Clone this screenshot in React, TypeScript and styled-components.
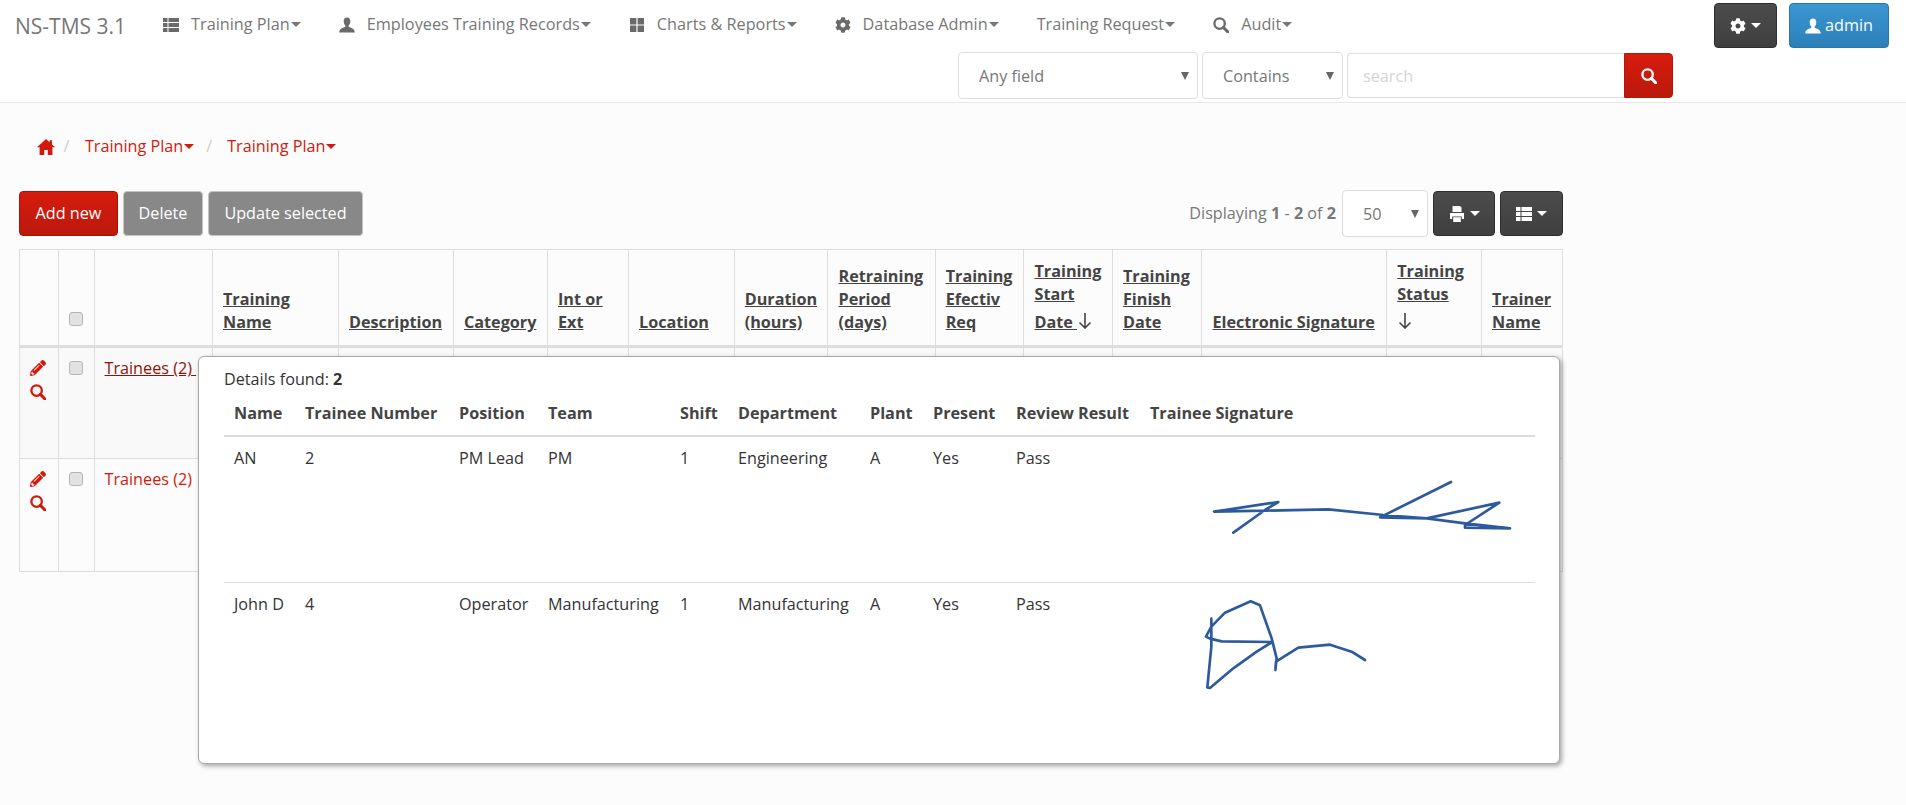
import React from "react";
import styled, { createGlobalStyle } from "styled-components";
import { FaCog, FaPencilAlt } from "react-icons/fa";

const Global = createGlobalStyle`
  html, body { margin: 0; padding: 0; background: #fcfcfc; }
  body { font-family: "Open Sans", "Liberation Sans", sans-serif; font-size: 16.2px; line-height: 23px; color: #333; min-height: 805px; }
  * { box-sizing: border-box; }
`;

const Header = styled.header`
  height: 103px;
  background: #fff;
  border-bottom: 1px solid #e7e7e7;
  display: flex;
  flex-direction: column;
`;
const TopRow = styled.div`
  display: flex;
  align-items: flex-start;
  justify-content: space-between;
  padding: 3px 17px 0 15px;
  height: 52px;
`;
const Brand = styled.span`
  font-size: 21px;
  color: #777;
  line-height: 46px;
  margin-right: 18px;
`;
const NavLeft = styled.nav`
  display: flex;
  align-items: center;
  height: 45px;
`;
const NavItem = styled.a`
  display: flex;
  align-items: center;
  color: #777;
  font-size: 16.25px;
  padding: 0 19px 2px;
  white-space: nowrap;
`;
const NavIcon = styled.span`
  display: inline-flex;
  margin-right: 12px;
  color: #6a6a6a;
`;
const Caret = styled.i<{ $color?: string }>`
  display: inline-block;
  width: 0;
  height: 0;
  margin-left: 1px;
  border-top: 5px solid ${(p) => p.$color || "currentColor"};
  border-left: 5px solid transparent;
  border-right: 5px solid transparent;
`;
const UserActions = styled.div`
  display: flex;
  gap: 12px;
`;
const Btn = styled.button<{ $kind: "red" | "gray" | "dark" | "blue"; $w: number }>`
  width: ${(p) => p.$w}px;
  height: 45px;
  display: inline-flex;
  align-items: center;
  justify-content: center;
  gap: 4px;
  padding: 0;
  font: inherit;
  color: #fff;
  border-radius: 4px;
  border: 1px solid
    ${(p) => ({ red: "#a81208", gray: "#c4c4c4", dark: "#2e2e2e", blue: "#2a76a8" })[p.$kind]};
  background: ${(p) =>
    ({
      red: "linear-gradient(#d61c0d, #bb190d)",
      gray: "#888888",
      dark: "linear-gradient(#4c4c4c, #3f3f3f)",
      blue: "linear-gradient(#3b96d2, #2c80b9)",
    })[p.$kind]};
`;
const SearchRow = styled.form`
  display: flex;
  justify-content: flex-end;
  padding-right: 233px;
  gap: 4px;
  height: 47px;
`;
const arrow = encodeURIComponent(
  '<svg xmlns="http://www.w3.org/2000/svg" width="8" height="8"><path d="M0 0h8L4 8z" fill="#666"/></svg>'
);
const Select = styled.select<{ $w: number }>`
  appearance: none;
  width: ${(p) => p.$w}px;
  height: 47px;
  padding: 2px 20px 0;
  font: inherit;
  color: #777;
  background: #fff url("data:image/svg+xml,${arrow}") no-repeat right 8px center;
  border: 1px solid #ddd;
  border-radius: 4px;
`;
const SearchGroup = styled.div`
  display: flex;
  height: 45px;
  margin-top: 1px;
`;
const SearchInput = styled.input`
  width: 277px;
  height: 45px;
  padding: 0 15px;
  font: inherit;
  border: 1px solid #ddd;
  border-right: 0;
  border-radius: 4px 0 0 4px;
  background: #fff;
  &::placeholder { color: #d4d4d4; }
`;
const SearchBtn = styled.button`
  width: 49px;
  height: 45px;
  padding: 0;
  display: flex;
  align-items: center;
  justify-content: center;
  color: #fff;
  border: 1px solid #b3160a;
  border-radius: 0 4px 4px 0;
  background: linear-gradient(#d61c0d, #bb190d);
`;

const Main = styled.main`
  width: 1563px;
  padding: 32px 0 0 19px;
`;
const Crumbs = styled.div`
  display: flex;
  align-items: center;
  height: 23px;
  padding-left: 18px;
  margin-bottom: 33px;
  color: #d2190b;
`;
const CrumbSep = styled.span<{ $l: number; $r: number }>`
  color: #ccc;
  margin: 0 ${(p) => p.$r}px 0 ${(p) => p.$l}px;
`;
const CrumbLink = styled.a`
  color: #d2190b;
  white-space: nowrap;
`;
const Toolbar = styled.div`
  display: flex;
  justify-content: space-between;
  align-items: center;
  height: 45px;
  margin-bottom: 13px;
`;
const ToolGroup = styled.div`
  display: flex;
  align-items: center;
  gap: 5px;
`;
const Count = styled.span`
  color: #777;
  margin-right: 1px;
`;

const TableWrap = styled.div`
  position: relative;
`;
const Grid = styled.table`
  width: 1543.5px;
  table-layout: fixed;
  border-collapse: collapse;
`;
const ColW = styled.col<{ $w: number }>`
  width: ${(p) => p.$w}px;
`;
const Th = styled.th`
  height: 97px;
  padding: 8px 10px 11px;
  border: 1px solid #ddd;
  border-bottom: 3px solid #ddd;
  vertical-align: bottom;
  text-align: left;
  font-weight: 700;
  color: #444;
`;
const SortLink = styled.a`
  text-decoration: underline;
`;
const ArrowSvg = styled.svg`
  vertical-align: -1px;
  fill: none;
  stroke: #444;
  stroke-width: 1.6;
`;
const Td = styled.td<{ $h: number; $striped?: boolean }>`
  height: ${(p) => p.$h}px;
  padding: 9px 10px;
  border: 1px solid #ddd;
  vertical-align: top;
  background: ${(p) => (p.$striped ? "#f9f9f9" : "transparent")};
`;
const IconStack = styled.div`
  display: flex;
  flex-direction: column;
  gap: 8px;
  color: #d2190b;
  margin-top: 3px;
`;
const Check = styled.input.attrs({ type: "checkbox" })<{ $head?: boolean }>`
  appearance: none;
  display: block;
  width: 14px;
  height: 14px;
  margin: 4px 0 ${(p) => (p.$head ? "8px" : "0")};
  background: #e2e2e2;
  border: 1px solid #b5b5b5;
  border-radius: 3px;
`;
const TraineeLink = styled.a<{ $hover?: boolean }>`
  white-space: pre;
  color: ${(p) => (p.$hover ? "#8f1007" : "#d2190b")};
  text-decoration: ${(p) => (p.$hover ? "underline" : "none")};
`;

const Popover = styled.div`
  position: absolute;
  left: 179px;
  top: 107px;
  width: 1362px;
  height: 408px;
  padding: 11px 25px;
  background: #fff;
  border: 1px solid #aaa;
  border-radius: 6px;
  box-shadow: 2px 2px 5px rgba(0, 0, 0, 0.35);
  color: #333;
`;
const Found = styled.div`
  height: 23px;
`;
const Detail = styled.table`
  width: 1311px;
  table-layout: fixed;
  border-collapse: collapse;
  margin-top: 3px;
`;
const DTh = styled.th`
  height: 42px;
  padding: 8px 10px 10px;
  text-align: left;
  font-weight: 700;
  color: #444;
  border-bottom: 2px solid #ddd;
  white-space: nowrap;
`;
const DTd = styled.td<{ $h: number; $line?: boolean }>`
  height: ${(p) => p.$h}px;
  padding: 10px;
  vertical-align: top;
  white-space: nowrap;
  border-bottom: ${(p) => (p.$line ? "1px solid #ddd" : "0")};
`;
const SigSvg = styled.svg`
  display: block;
  margin: -3px 0 0;
  width: 370px;
  height: 100px;
  fill: none;
  stroke: #2d5a9e;
  stroke-width: 8;
  stroke-linejoin: round;
  stroke-linecap: round;
`;

const ThList = () => (
  <svg width="16" height="16" viewBox="0 0 16 16" fill="currentColor">
    <path d="M0 1h4.5v4H0zM5.5 1H16v4H5.5zM0 6h4.5v4H0zM5.5 6H16v4H5.5zM0 11h4.5v4H0zM5.5 11H16v4H5.5z" />
  </svg>
);
const ThLarge = () => (
  <svg width="16" height="16" viewBox="0 0 16 16" fill="currentColor">
    <path d="M1 1h6.4v6.4H1zM8.6 1H15v6.4H8.6zM1 8.6h6.4V15H1zM8.6 8.6H15V15H8.6z" />
  </svg>
);
const User = () => (
  <svg width="16" height="16" viewBox="0 0 16 16" fill="currentColor">
    <path d="M8 0.5C5.7.5 4.7 2.2 4.7 4.2c0 1.8.7 3.3 1.6 4.3v1.3C5 10.7.4 11.2.2 15.5h15.6c-.2-4.3-4.8-4.8-6.1-5.7V8.5c.9-1 1.6-2.5 1.6-4.3C11.3 2.2 10.3.5 8 .5z" />
  </svg>
);
const Search = ({ s = 16 }: { s?: number }) => (
  <svg width={s} height={s} viewBox="0 0 16 16" fill="none" stroke="currentColor">
    <circle cx="6.6" cy="6.6" r="5.2" strokeWidth="2.3" />
    <path d="M10.4 10.4L15 15" strokeWidth="3" strokeLinecap="round" />
  </svg>
);
const Home = () => (
  <svg width="18" height="16" viewBox="0 0 18 16" fill="currentColor">
    <path d="M9 0L0 8.3h2.6V16h4.6v-5h3.6v5h4.6V8.3H18l-3-2.8V1.2h-2.4v2.1z" />
  </svg>
);
const Printer = () => (
  <svg width="16" height="16" viewBox="0 0 16 16" fill="currentColor">
    <path fillRule="evenodd" d="M4 0h7l1.5 1.5V6h-9V.5zM1 7h14v6h-2.2v-2.5H3.2V13H1zM4.2 11.3h7.6V16H4.2z" />
  </svg>
);
const ArrowDown = () => (
  <ArrowSvg width="16" height="23" viewBox="0 -6 16 23">
    <path d="M8 1v15M2.5 10.5L8 16l5.5-5.5" />
  </ArrowSvg>
);

const navItems: { icon?: React.ReactNode; label: string }[] = [
  { icon: <ThList />, label: "Training Plan" },
  { icon: <User />, label: "Employees Training Records" },
  { icon: <ThLarge />, label: "Charts & Reports" },
  { icon: <FaCog size={16} />, label: "Database Admin" },
  { label: "Training Request" },
  { icon: <Search />, label: "Audit" },
];

const colWidths = [38.5, 36, 118.5, 126, 115, 94, 81, 105.7, 93.8, 107.2, 88.8, 88.5, 89.5, 184.7, 94.9, 81.2];
const headers: React.ReactNode[] = [
  "Training Name",
  "Description",
  "Category",
  "Int or Ext",
  "Location",
  "Duration (hours)",
  "Retraining Period (days)",
  "Training Efectiv Req",
  <>Training Start Date <ArrowDown /></>,
  "Training Finish Date",
  "Electronic Signature",
  <>Training Status<br /><ArrowDown /></>,
  "Trainer Name",
];

const detailCols = [71, 154, 89, 132, 58, 132, 63, 83, 134, 395];
const detailHeads = ["Name", "Trainee Number", "Position", "Team", "Shift", "Department", "Plant", "Present", "Review Result", "Trainee Signature"];
const detailRows = [
  {
    cells: ["AN", "2", "PM Lead", "PM", "1", "Engineering", "A", "Yes", "Pass"],
    h: 146,
    line: true,
    view: "0 -48 1110 300",
    paths: [
      "M250 218L345 150L385 126L192 155L345 152L535 148L700 165L830 175L945 190L1080 205L945 203L945 195L1048 128L830 175L690 172L903 66",
    ],
  },
  {
    cells: ["John D", "4", "Operator", "Manufacturing", "1", "Manufacturing", "A", "Yes", "Pass"],
    h: 120,
    line: false,
    view: "0 390 1110 300",
    paths: [
      "M184 476L184 560L172 682L180 684L250 625L320 575L367 546L215 544L180 536L168 530L184 500L225 458L302 424L330 436L365 535L380 595L376 630L378 605L445 563L540 554L605 575L645 600",
    ],
  },
];

export default function App() {
  return (
    <>
      <Global />
      <Header>
        <TopRow>
          <NavLeft>
            <Brand>NS-TMS 3.1</Brand>
            {navItems.map((n) => (
              <NavItem key={n.label}>
                {n.icon && <NavIcon>{n.icon}</NavIcon>}
                {n.label}
                <Caret />
              </NavItem>
            ))}
          </NavLeft>
          <UserActions>
            <Btn $kind="dark" $w={63}>
              <FaCog size={16} />
              <Caret />
            </Btn>
            <Btn $kind="blue" $w={100}>
              <User />
              admin
            </Btn>
          </UserActions>
        </TopRow>
        <SearchRow>
          <Select $w={240}>
            <option>Any field</option>
          </Select>
          <Select $w={141}>
            <option>Contains</option>
          </Select>
          <SearchGroup>
            <SearchInput placeholder="search" />
            <SearchBtn type="button">
              <Search />
            </SearchBtn>
          </SearchGroup>
        </SearchRow>
      </Header>
      <Main>
        <Crumbs>
          <Home />
          <CrumbSep $l={8.4} $r={15.6}>/</CrumbSep>
          <CrumbLink>Training Plan</CrumbLink>
          <Caret />
          <CrumbSep $l={12} $r={15}>/</CrumbSep>
          <CrumbLink>Training Plan</CrumbLink>
          <Caret />
        </Crumbs>
        <Toolbar>
          <ToolGroup>
            <Btn $kind="red" $w={99}>Add new</Btn>
            <Btn $kind="gray" $w={80}>Delete</Btn>
            <Btn $kind="gray" $w={155}>Update selected</Btn>
          </ToolGroup>
          <ToolGroup>
            <Count>
              Displaying <b>1</b> - <b>2</b> of <b>2</b>
            </Count>
            <Select $w={86}>
              <option>50</option>
            </Select>
            <Btn $kind="dark" $w={62}>
              <Printer />
              <Caret />
            </Btn>
            <Btn $kind="dark" $w={63}>
              <ThList />
              <Caret />
            </Btn>
          </ToolGroup>
        </Toolbar>
        <TableWrap>
          <Grid>
            <colgroup>
              {colWidths.map((w, i) => (
                <ColW key={i} $w={w} />
              ))}
            </colgroup>
            <thead>
              <tr>
                <Th />
                <Th>
                  <Check $head />
                </Th>
                <Th />
                {headers.map((h, i) => (
                  <Th key={i}>
                    <SortLink>{h}</SortLink>
                  </Th>
                ))}
              </tr>
            </thead>
            <tbody>
              {[112, 113].map((h, r) => (
                <tr key={r}>
                  <Td $h={h} $striped={r === 0}>
                    <IconStack>
                      <FaPencilAlt size={16} />
                      <Search />
                    </IconStack>
                  </Td>
                  <Td $h={h} $striped={r === 0}>
                    <Check />
                  </Td>
                  <Td $h={h} $striped={r === 0}>
                    <TraineeLink $hover={r === 0}>{"Trainees (2) "}</TraineeLink>
                  </Td>
                  {headers.map((_, i) => (
                    <Td key={i} $h={h} $striped={r === 0} />
                  ))}
                </tr>
              ))}
            </tbody>
          </Grid>
          <Popover>
            <Found>
              Details found: <b>2</b>
            </Found>
            <Detail>
              <colgroup>
                {detailCols.map((w, i) => (
                  <ColW key={i} $w={w} />
                ))}
              </colgroup>
              <thead>
                <tr>
                  {detailHeads.map((h) => (
                    <DTh key={h}>{h}</DTh>
                  ))}
                </tr>
              </thead>
              <tbody>
                {detailRows.map((row) => (
                  <tr key={row.cells[0]}>
                    {row.cells.map((c, i) => (
                      <DTd key={i} $h={row.h} $line={row.line}>
                        {c}
                      </DTd>
                    ))}
                    <DTd $h={row.h} $line={row.line}>
                      <SigSvg viewBox={row.view}>
                        {row.paths.map((d) => (
                          <path key={d} d={d} />
                        ))}
                      </SigSvg>
                    </DTd>
                  </tr>
                ))}
              </tbody>
            </Detail>
          </Popover>
        </TableWrap>
      </Main>
    </>
  );
}
